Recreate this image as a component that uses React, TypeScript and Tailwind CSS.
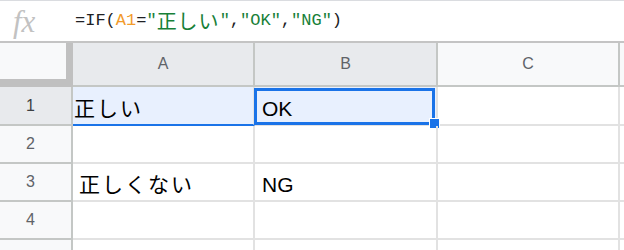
import React from 'react';

type Row = { n: number; h: string; a?: string; b?: string; selected?: boolean; label?: boolean };

const rows: Row[] = [
  { n: 1, h: 'h-[39px]', a: '正しい', b: 'OK', selected: true, label: true },
  { n: 2, h: 'h-[38px]', label: true },
  { n: 3, h: 'h-[38px]', a: '正しくない', b: 'NG', label: true },
  { n: 4, h: 'h-[38px]', label: true },
  { n: 5, h: 'h-[38px]' },
];

const App: React.FC = () => {
  return (
    <div className="w-[624px] h-[250px] overflow-hidden bg-white font-['Liberation_Sans','Noto_Sans_CJK_JP',sans-serif]">
      {/* formula bar */}
      <div className="flex h-[43px] items-center border-t border-b-2 border-t-[#dadce0] border-b-[#c4c4c4]">
        <div className="w-[75px] shrink-0 pl-[13px] font-['Liberation_Serif',serif] italic text-[31px] leading-none text-[#c2c2c2]">
          fx
        </div>
        <div className="flex items-center font-['Liberation_Mono','Noto_Sans_CJK_JP',monospace] text-[17px] text-[#202124] whitespace-pre">
          <span>=IF(</span>
          <span className="text-[#f29b2b]">A1</span>
          <span>=</span>
          <span className="text-[#188038]">"</span>
          <span className="text-[#188038] text-[20px] font-['Noto_Sans_CJK_JP',sans-serif] tracking-[1px]">正しい</span>
          <span className="text-[#188038]">"</span>
          <span>,</span>
          <span className="text-[#188038]">"OK"</span>
          <span>,</span>
          <span className="text-[#188038]">"NG"</span>
          <span>)</span>
        </div>
      </div>

      {/* column headers */}
      <div className="flex h-[44px] text-[16px] text-[#5f6368]">
        <div className="w-[73px] shrink-0 bg-[#f8f9fa] border-r-[7px] border-b-[8px] border-[#c0c0c0]" />
        <div className="w-[182px] shrink-0 flex items-center justify-center bg-[#e8eaed] border-r-2 border-b-2 border-[#c4c7c5]">A</div>
        <div className="w-[183px] shrink-0 flex items-center justify-center bg-[#e8eaed] border-r-2 border-b-2 border-[#c4c7c5]">B</div>
        <div className="w-[182px] shrink-0 flex items-center justify-center bg-[#f8f9fa] border-r-2 border-b-2 border-[#c4c7c5]">C</div>
        <div className="flex-1 bg-[#f8f9fa] border-b-2 border-[#c4c7c5]" />
      </div>

      {/* grid rows */}
      {rows.map((r) => (
        <div key={r.n} className={`flex ${r.h} text-[21px] text-black`}>
          <div
            className={`w-[73px] shrink-0 flex items-center justify-center pr-[10px] text-[16px] border-r-2 border-b-2 border-[#c4c7c5] ${
              r.selected ? 'bg-[#e8eaed] text-[#3c4043]' : 'bg-[#f8f9fa] text-[#5f6368]'
            }`}
          >
            {r.label ? r.n : null}
          </div>
          <div
            className={`w-[182px] shrink-0 flex items-end pb-[5px] leading-none border-r-2 border-b-2 border-r-[#e2e2e2] ${
              r.selected ? 'bg-[#e8f0fe] border-b-[#1a73e8] pl-[1px]' : 'border-b-[#e2e2e2] pl-[6px]'
            }`}
          >
            {r.a && <span className="tracking-[2px]">{r.a}</span>}
          </div>
          <div
            className={`relative w-[183px] shrink-0 flex items-end pb-[5px] pl-[7px] leading-none border-r-2 border-b-2 border-[#e2e2e2] ${
              r.selected ? 'bg-[#e8f0fe]' : ''
            }`}
          >
            {r.b}
            {r.selected && (
              <>
                <div className="absolute -left-[1px] top-[1px] right-[1px] -bottom-[1px] border-[3px] border-[#1a73e8]" />
                <div className="absolute -right-[4px] -bottom-[5px] w-[11px] h-[11px] bg-[#1a73e8] border border-white" />
              </>
            )}
          </div>
          <div className="w-[182px] shrink-0 border-r-2 border-b-2 border-[#e2e2e2]" />
          <div className="flex-1 border-b-2 border-[#e2e2e2]" />
        </div>
      ))}
    </div>
  );
};

export default App;
